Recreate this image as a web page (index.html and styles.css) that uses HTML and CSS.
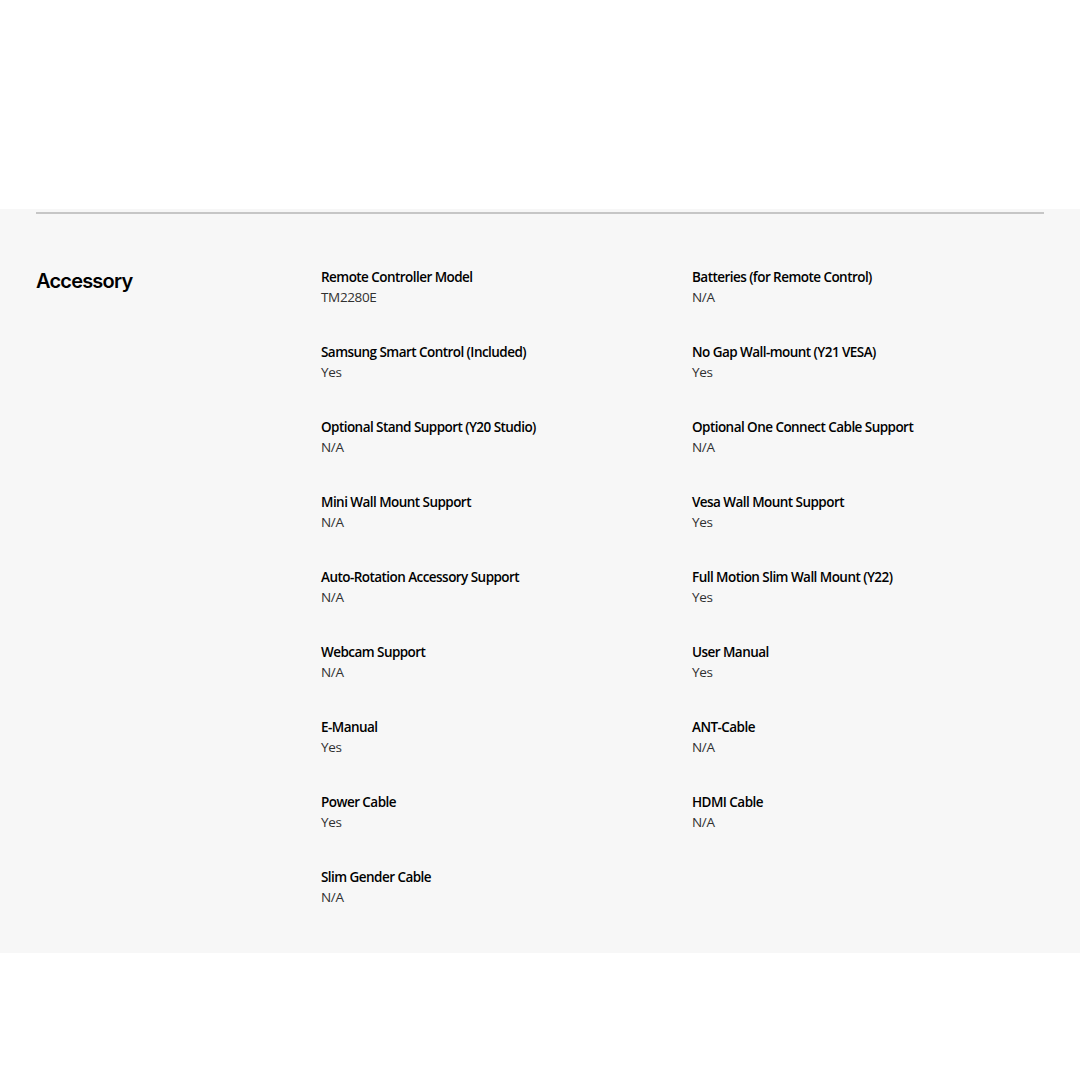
FILE: index.html
```html
<!DOCTYPE html>
<html lang="en">
<head>
<meta charset="utf-8">
<title>Accessory</title>
<link rel="stylesheet" href="styles.css">
</head>
<body>
<div class="top-space"></div>
<section class="spec">
  <div class="spec-inner">
    <h2 class="spec-title">Accessory</h2>
    <dl class="spec-list">
      <div class="item"><dt>Remote Controller Model</dt><dd>TM2280E</dd></div>
      <div class="item"><dt>Batteries (for Remote Control)</dt><dd>N/A</dd></div>
      <div class="item"><dt>Samsung Smart Control (Included)</dt><dd>Yes</dd></div>
      <div class="item"><dt>No Gap Wall-mount (Y21 VESA)</dt><dd>Yes</dd></div>
      <div class="item"><dt>Optional Stand Support (Y20 Studio)</dt><dd>N/A</dd></div>
      <div class="item"><dt>Optional One Connect Cable Support</dt><dd>N/A</dd></div>
      <div class="item"><dt>Mini Wall Mount Support</dt><dd>N/A</dd></div>
      <div class="item"><dt>Vesa Wall Mount Support</dt><dd>Yes</dd></div>
      <div class="item"><dt>Auto-Rotation Accessory Support</dt><dd>N/A</dd></div>
      <div class="item"><dt>Full Motion Slim Wall Mount (Y22)</dt><dd>Yes</dd></div>
      <div class="item"><dt>Webcam Support</dt><dd>N/A</dd></div>
      <div class="item"><dt>User Manual</dt><dd>Yes</dd></div>
      <div class="item"><dt>E-Manual</dt><dd>Yes</dd></div>
      <div class="item"><dt>ANT-Cable</dt><dd>N/A</dd></div>
      <div class="item"><dt>Power Cable</dt><dd>Yes</dd></div>
      <div class="item"><dt>HDMI Cable</dt><dd>N/A</dd></div>
      <div class="item"><dt>Slim Gender Cable</dt><dd>N/A</dd></div>
    </dl>
  </div>
</section>
</body>
</html>
```

FILE: styles.css
```css
html, body {
  margin: 0;
  padding: 0;
  background: #ffffff;
}

body {
  font-family: "Open Sans", "Noto Sans", sans-serif;
  color: #000;
}

.top-space {
  height: 209px;
}

.spec {
  background: #f7f7f7;
  padding: 3px 36px 45px;
}

.spec-inner {
  border-top: 2px solid #c6c6c6;
  padding-top: 53px;
  display: grid;
  grid-template-columns: 285px 1fr;
}

.spec-title {
  margin: 0;
  font-family: Inter, "Noto Sans", sans-serif;
  font-size: 20px;
  line-height: 28px;
  font-weight: 600;
  letter-spacing: -0.8px;
  color: #000;
}

.spec-list {
  margin: 0;
  display: grid;
  grid-template-columns: 371px 1fr;
  row-gap: 34px;
}

.item dt {
  font-size: 13.5px;
  line-height: 20px;
  font-weight: 600;
  letter-spacing: -0.55px;
  color: #000;
}

.item dd {
  margin: 0;
  font-size: 13.5px;
  line-height: 21px;
  font-weight: 400;
  letter-spacing: -0.35px;
  color: #313131;
}
```
